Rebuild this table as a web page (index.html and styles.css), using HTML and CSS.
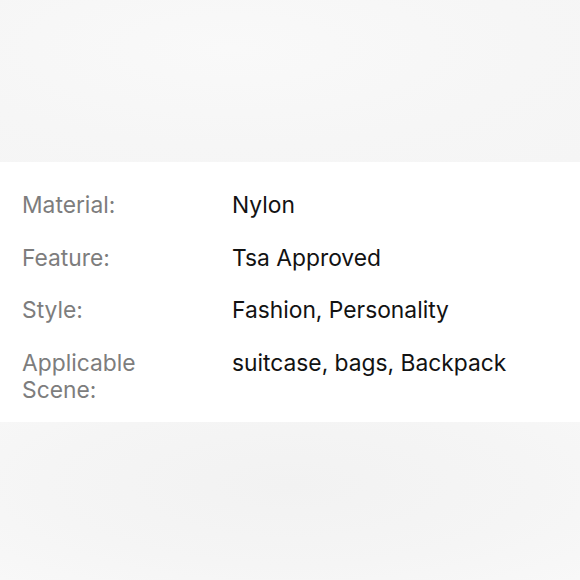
FILE: index.html
```html
<!DOCTYPE html>
<html>
<head>
<meta charset="utf-8">
<link rel="stylesheet" href="styles.css">
</head>
<body>
<div class="page">
  <div class="band band-top"></div>
  <section class="specs">
    <div class="row"><div class="label">Material:</div><div class="value">Nylon</div></div>
    <div class="row"><div class="label">Feature:</div><div class="value">Tsa Approved</div></div>
    <div class="row"><div class="label">Style:</div><div class="value">Fashion, Personality</div></div>
    <div class="row"><div class="label">Applicable<br>Scene:</div><div class="value">suitcase, bags, Backpack</div></div>
  </section>
  <div class="band band-bottom"></div>
</div>
</body>
</html>
```
FILE: styles.css
```css
html, body {
  margin: 0;
  padding: 0;
}
body {
  width: 580px;
  height: 580px;
  overflow: hidden;
  background: #f5f5f5;
  font-family: Inter, "Noto Sans", sans-serif;
}
.page {
  display: flex;
  flex-direction: column;
  height: 580px;
}
.band-top {
  height: 162px;
  background: radial-gradient(ellipse at 40% 30%, #f9f9f9 0%, #f6f6f6 60%, #f5f5f5 100%);
}
.band-bottom {
  flex: 1;
  background: radial-gradient(ellipse at 50% 40%, #f2f2f2 0%, #f5f5f5 60%, #f8f8f8 100%);
}
.specs {
  background: #ffffff;
  padding: 29px 0 19px 22px;
  display: flex;
  flex-direction: column;
  gap: 25.7px;
}
.row {
  display: grid;
  grid-template-columns: 210px 1fr;
  font-size: 22.8px;
  line-height: 27px;
}
.label {
  color: #7d7d7d;
}
.value {
  color: #121212;
}
```
